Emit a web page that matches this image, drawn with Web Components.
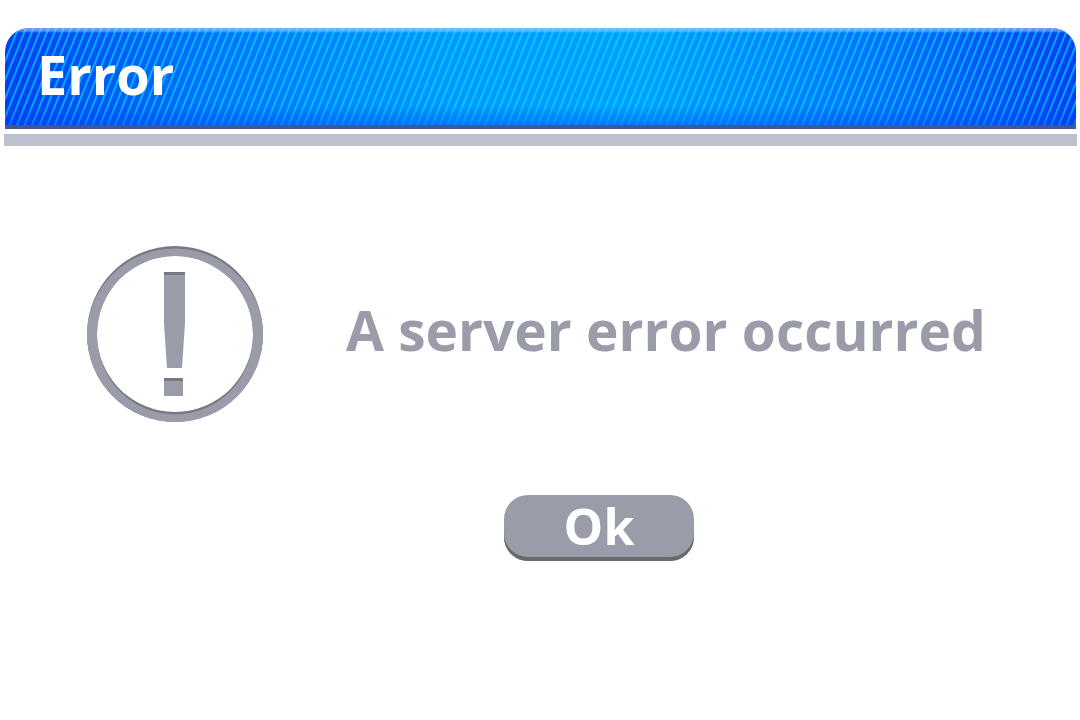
<!DOCTYPE html>
<html lang="en">
<head>
<meta charset="utf-8">
<meta name="viewport" content="width=device-width, initial-scale=1">
<title>Error</title>
<style>
body{margin:0;background:#fff;font-family:"Open Sans","Noto Sans",sans-serif;font-weight:700}
</style>
</head>
<body>
<error-dialog>
<dialog-title slot="title">Error</dialog-title>
<alert-icon slot="icon"></alert-icon>
<dialog-message slot="message">A server error occurred</dialog-message>
<dialog-button slot="actions">Ok</dialog-button>
</error-dialog>
<script>
const define=(name,html)=>customElements.define(name,class extends HTMLElement{
  constructor(){super();this.attachShadow({mode:'open'}).innerHTML=html;}
});
define('error-dialog',`<style>
:host{display:block;padding:28px 3px 0 4px}
.rule{height:12px;margin-top:5px;background:#bebfcf}
.body{display:flex;align-items:center;gap:82px;padding:100px 82px 0}
.actions{display:flex;justify-content:center;padding:73px 0 40px 117px}
</style>
<section role="alertdialog" aria-label="Error">
<slot name="title"></slot><div class="rule"></div>
<div class="body"><slot name="icon"></slot><slot name="message"></slot></div>
<div class="actions"><slot name="actions"></slot></div>
</section>`);
define('dialog-title',`<style>
:host{display:block}
header{margin:0 1px;padding:14px 32px 19px;color:#fff;
border-bottom:4px solid #46588a;border-radius:24px 24px 0 0;
background:linear-gradient(rgba(200,225,255,.55) 0,rgba(170,205,255,.5) 3px,rgba(160,200,255,0) 5px),
linear-gradient(transparent 80%,rgba(0,60,255,.4)),
repeating-linear-gradient(112deg,rgba(0,230,255,0) 0,rgba(0,230,255,0) 4px,rgba(0,230,255,.6) 5px,rgba(0,230,255,.6) 6px,rgba(0,230,255,0) 7px),
linear-gradient(90deg,#0040f0,#0074fa 20%,#0098ff 42%,#009eff 60%,#0070fc 82%,#0040f0)}
h1{margin:0;font-size:54px;line-height:64px;font-weight:700}
</style><header><h1><slot></slot></h1></header>`);
define('alert-icon',`<style>
:host{display:block;flex:none;width:178px;height:176px}
svg{display:block}
</style><svg width="178" height="176" viewBox="0 0 178 176" role="img" aria-label="Alert">
<defs><clipPath id="ring"><path clip-rule="evenodd" d="M89 0a88 88 0 1 0 0 176a88 88 0 1 0 0-176M89 10a78 78 0 1 1 0 156a78 78 0 1 1 0-156"/></clipPath></defs>
<g clip-path="url(#ring)"><path fill="#777983" d="M0 0h178v176H0z"/>
<circle cx="89" cy="91" r="83" fill="none" stroke="#9a9ca9" stroke-width="11"/></g>
<circle cx="89" cy="88" r="83" fill="none" stroke="#9a9ca9" stroke-width="4"/>
<path fill="#9a9ca9" d="M78 26h21v51l-3 45H81l-3-45zM78 132h19v18H78z"/>
<path fill="#777983" d="M78 26h21v3H78zM78 132h19v3H78z"/>
</svg>`);
define('dialog-message',`<style>
:host{display:block;color:#9a9ca9}
p{margin:0;padding-bottom:8px;font-size:55px;line-height:72px}
</style><p><slot></slot></p>`);
define('dialog-button',`<style>
:host{display:block}
button{display:block;min-width:190px;height:66px;padding:0 32px 4px;border:0;border-radius:24px;
background:#9a9ca9;box-shadow:inset 0 -4px #696969;color:#fff;font:inherit;font-size:50px;line-height:60px;cursor:pointer}
</style><button type="button"><slot></slot></button>`);
</script>
</body>
</html>
